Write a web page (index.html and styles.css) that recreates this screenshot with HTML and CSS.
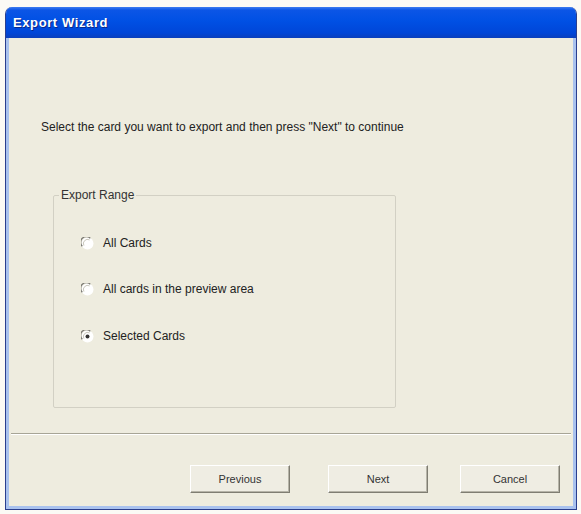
FILE: index.html
```html
<!DOCTYPE html>
<html>
<head>
<meta charset="utf-8">
<link rel="stylesheet" href="styles.css">
</head>
<body>
<div class="window">
  <div class="titlebar"><span class="title">Export Wizard</span></div>
  <div class="content">
    <p class="intro">Select the card you want to export and then press "Next" to continue</p>
    <fieldset class="group">
      <legend>Export Range</legend>
      <label class="radio">
        <svg class="rb" width="13" height="13" viewBox="0 0 13 13"><circle cx="6.5" cy="6.5" r="6" fill="#fff"/><path d="M1.3 9.3 A5.5 5.5 0 0 1 9.3 1.3" fill="none" stroke="#7c7b74" stroke-width="1.3"/><path d="M2.9 8.6 A4.2 4.2 0 0 1 8.6 2.9" fill="none" stroke="#c9c7bc" stroke-width="1"/></svg>
        <span>All Cards</span>
      </label>
      <label class="radio">
        <svg class="rb" width="13" height="13" viewBox="0 0 13 13"><circle cx="6.5" cy="6.5" r="6" fill="#fff"/><path d="M1.3 9.3 A5.5 5.5 0 0 1 9.3 1.3" fill="none" stroke="#7c7b74" stroke-width="1.3"/><path d="M2.9 8.6 A4.2 4.2 0 0 1 8.6 2.9" fill="none" stroke="#c9c7bc" stroke-width="1"/></svg>
        <span>All cards in the preview area</span>
      </label>
      <label class="radio">
        <svg class="rb" width="13" height="13" viewBox="0 0 13 13"><circle cx="6.5" cy="6.5" r="6" fill="#fff"/><path d="M1.3 9.3 A5.5 5.5 0 0 1 9.3 1.3" fill="none" stroke="#7c7b74" stroke-width="1.3"/><path d="M2.9 8.6 A4.2 4.2 0 0 1 8.6 2.9" fill="none" stroke="#c9c7bc" stroke-width="1"/><circle cx="6.5" cy="6.5" r="2" fill="#333"/></svg>
        <span>Selected Cards</span>
      </label>
    </fieldset>
    <div class="separator"></div>
    <div class="buttons">
      <button class="btn">Previous</button>
      <button class="btn">Next</button>
      <button class="btn">Cancel</button>
    </div>
  </div>
</div>
</body>
</html>
```
FILE: styles.css
```css
html, body {
  margin: 0;
  padding: 0;
  background: #fbfaf5;
  font-family: "Liberation Sans", Arial, sans-serif;
}
body {
  padding: 7px 0 0 5px;
}
.window {
  width: 572px;
  height: 503px;
  box-sizing: border-box;
  border: 1px solid #2a3f8e;
  border-top: none;
  border-radius: 7px 7px 0 0;
  background: #a9c2ee;
  display: flex;
  flex-direction: column;
  overflow: hidden;
}
.titlebar {
  height: 31px;
  flex: none;
  background: linear-gradient(to bottom, #3d7bf0 0px, #0c56e6 3px, #0050e4 14px, #0046d8 26px, #0a3fbc 31px);
  display: flex;
  align-items: center;
  padding-left: 7px;
}
.title {
  color: #fff;
  font-weight: bold;
  font-size: 13px;
  letter-spacing: 0.6px;
  text-shadow: 1px 1px 0 #0a2a8a;
  margin-top: -1px;
}
.content {
  flex: 1;
  margin: 0 3px 3px 3px;
  background: #eeecdf;
  display: flex;
  flex-direction: column;
  position: relative;
}
.intro {
  margin: 83px 0 0 32px;
  font-size: 12px;
  color: #222;
  line-height: 13px;
}
.group {
  margin: 54px 0 0 44px;
  width: 343px;
  height: 220px;
  box-sizing: border-box;
  border: 1px solid #d2d0c4;
  border-radius: 2px;
  padding: 0 0 0 27px;
  display: flex;
  flex-direction: column;
}
.group legend {
  font-size: 12px;
  color: #333;
  padding: 0 2px;
  margin-left: -22px;
}
.radio {
  display: flex;
  align-items: center;
  gap: 9px;
  font-size: 12px;
  color: #222;
  height: 14px;
}
.radio:nth-of-type(1) { margin-top: 34px; }
.radio:nth-of-type(2) { margin-top: 32px; }
.radio:nth-of-type(3) { margin-top: 33px; }
.separator {
  margin: 25px 2px 0 2px;
  height: 1px;
  background: #a7a596;
  border-bottom: 1px solid #fff;
}
.buttons {
  display: flex;
  margin: 30px 0 0 181px;
  gap: 38px;
}
.btn {
  width: 100px;
  height: 28px;
  box-sizing: border-box;
  background: #efede3;
  border: 1px solid;
  border-color: #fff #7f7d72 #7f7d72 #fff;
  box-shadow: inset -1px -1px 0 #b6b4a8;
  font-family: "Liberation Sans", Arial, sans-serif;
  font-size: 11px;
  color: #333;
  padding: 0;
}
.btn:nth-child(3) { margin-left: -6px; }
```
